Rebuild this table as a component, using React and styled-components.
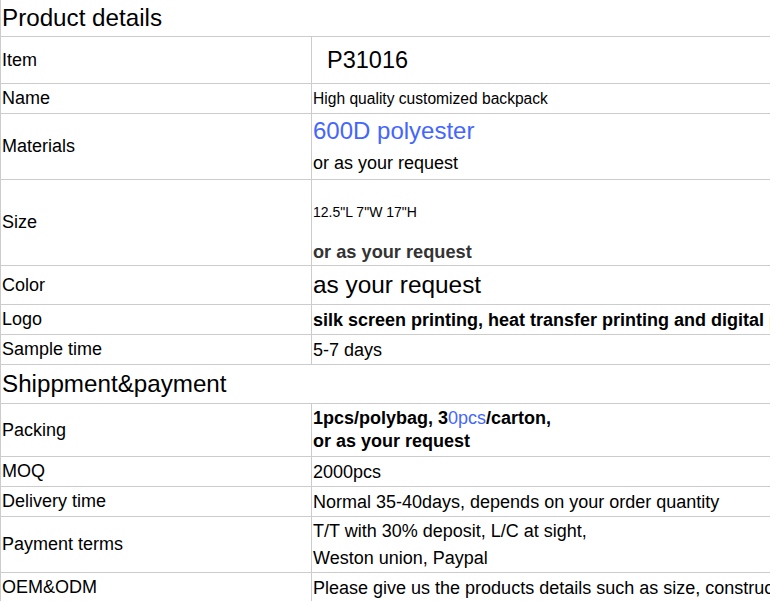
import React from 'react';
import styled, { createGlobalStyle } from 'styled-components';

const GlobalStyle = createGlobalStyle`
  html, body {
    margin: 0;
    padding: 0;
    background: #fff;
    overflow: hidden;
  }
  body {
    font-family: 'Liberation Sans', Arial, sans-serif;
    color: #000;
  }
`;

const Viewport = styled.div`
  width: 770px;
  height: 601px;
  overflow: hidden;
`;

const Sheet = styled.div`
  width: 1000px;
  border-left: 1px solid #ccc;
`;

const SectionTitle = styled.div`
  box-sizing: border-box;
  height: ${(p) => p.h}px;
  display: flex;
  align-items: center;
  padding-left: 1px;
  font-size: 24.2px;
  border-bottom: 1px solid #ccc;
`;

const Row = styled.div`
  box-sizing: border-box;
  height: ${(p) => p.h}px;
  display: grid;
  grid-template-columns: 310px 1fr;
  border-bottom: 1px solid #ccc;
`;

const Label = styled.div`
  display: flex;
  align-items: center;
  padding-left: 1px;
  font-size: 18px;
  white-space: nowrap;
`;

const Value = styled.div`
  border-left: 1px solid #ccc;
  display: flex;
  flex-direction: column;
  justify-content: ${(p) => (p.top ? 'flex-start' : 'center')};
  padding-top: ${(p) => p.top || 0}px;
  padding-left: ${(p) => p.indent || 1}px;
  white-space: nowrap;
`;

const Line = styled.div`
  font-size: ${(p) => p.size || 18}px;
  line-height: ${(p) => p.lh || 24}px;
  font-weight: ${(p) => (p.bold ? 700 : 400)};
  color: ${(p) => p.color || '#000'};
  margin-top: ${(p) => p.gap || 0}px;
`;

const Blue = styled.span`
  color: #4466ff;
  font-weight: 400;
`;

const App = () => (
  <Viewport>
    <GlobalStyle />
    <Sheet>
      <SectionTitle h={37}>Product details</SectionTitle>
      <Row h={47}>
        <Label>Item</Label>
        <Value indent={15}>
          <Line size={23.5}>P31016</Line>
        </Value>
      </Row>
      <Row h={30}>
        <Label>Name</Label>
        <Value>
          <Line size={15.6}>High quality customized backpack</Line>
        </Value>
      </Row>
      <Row h={66}>
        <Label>Materials</Label>
        <Value>
          <Line size={24} lh={32} color="#4466ff">600D polyester</Line>
          <Line size={18} lh={32}>or as your request</Line>
        </Value>
      </Row>
      <Row h={86}>
        <Label>Size</Label>
        <Value top={20}>
          <Line size={14}>12.5"L 7"W 17"H</Line>
          <Line size={18.2} bold color="#333" gap={16}>or as your request</Line>
        </Value>
      </Row>
      <Row h={39}>
        <Label>Color</Label>
        <Value>
          <Line size={24.4} lh={30}>as your request</Line>
        </Value>
      </Row>
      <Row h={30}>
        <Label>Logo</Label>
        <Value>
          <Line bold>silk screen printing, heat transfer printing and digital printing</Line>
        </Value>
      </Row>
      <Row h={30}>
        <Label>Sample time</Label>
        <Value>
          <Line>5-7 days</Line>
        </Value>
      </Row>
      <SectionTitle h={39}>Shippment&amp;payment</SectionTitle>
      <Row h={53}>
        <Label>Packing</Label>
        <Value>
          <Line bold lh={23}>
            1pcs/polybag, 3<Blue>0pcs</Blue>/carton,
          </Line>
          <Line bold lh={23}>or as your request</Line>
        </Value>
      </Row>
      <Row h={30}>
        <Label>MOQ</Label>
        <Value>
          <Line>2000pcs</Line>
        </Value>
      </Row>
      <Row h={30}>
        <Label>Delivery time</Label>
        <Value>
          <Line>Normal 35-40days, depends on your order quantity</Line>
        </Value>
      </Row>
      <Row h={56}>
        <Label>Payment terms</Label>
        <Value>
          <Line lh={27}>T/T with 30% deposit, L/C at sight,</Line>
          <Line lh={27}>Weston union, Paypal</Line>
        </Value>
      </Row>
      <Row h={30}>
        <Label>OEM&amp;ODM</Label>
        <Value>
          <Line>Please give us the products details such as size, construction and logo</Line>
        </Value>
      </Row>
    </Sheet>
  </Viewport>
);

export default App;
